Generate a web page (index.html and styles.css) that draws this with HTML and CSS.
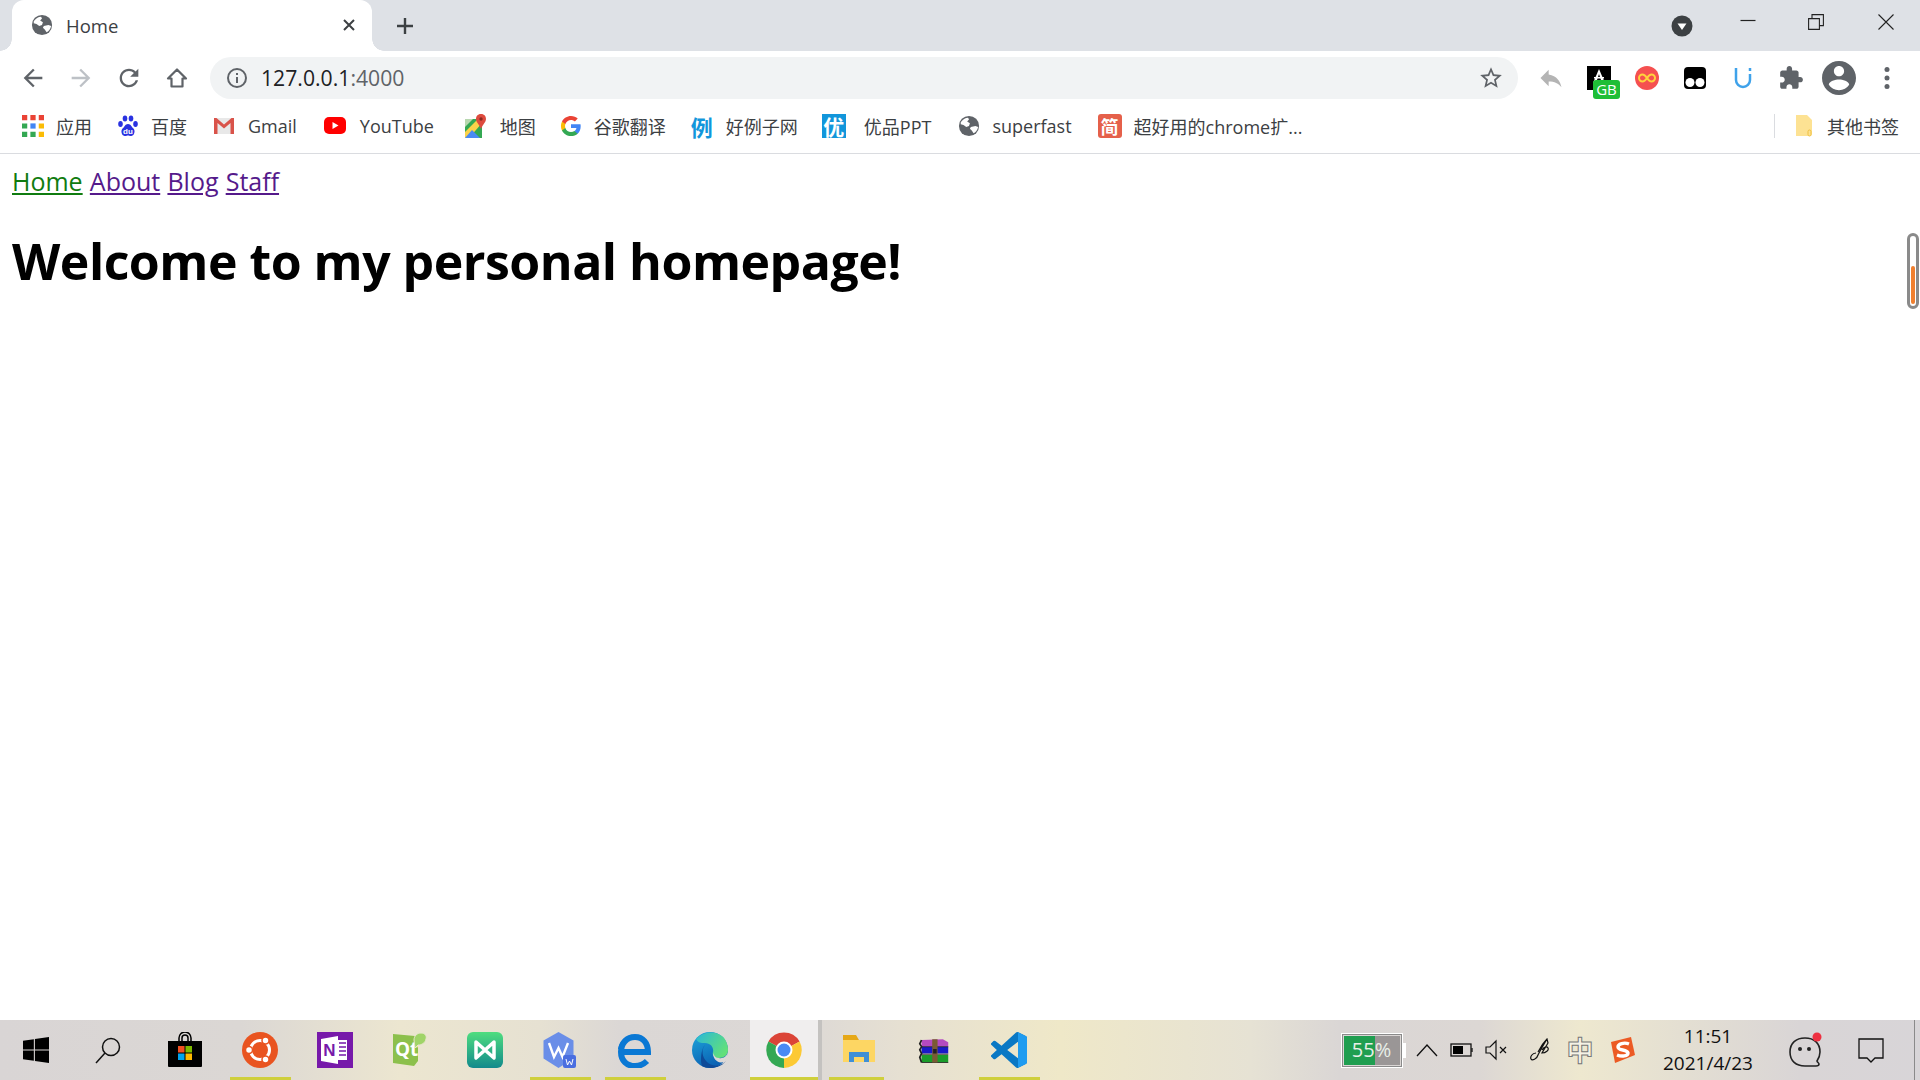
FILE: index.html
```html
<!DOCTYPE html>
<html lang="en">
<head>
<meta charset="utf-8">
<title>Home</title>
<link rel="stylesheet" href="styles.css">
</head>
<body>
<svg class="defs" width="0" height="0">
  <symbol id="globe" viewBox="0 0 24 24">
    <circle cx="12" cy="12" r="11" fill="#5f6368"/>
    <path d="M3 8c2-3 5-5 8-5l1 2-2 2 3 2-1 3-3 1-3-2-3-1z" fill="#fff"/>
    <path d="M14 13l5-1 3 1c-1 4-3 6-5 7l-2-3-2-2z" fill="#fff"/>
  </symbol>
</svg>
<div class="chrome">
  <div class="tabstrip">
    <div class="tab">
      <svg class="i22" viewBox="0 0 24 24"><use href="#globe"/></svg>
      <span class="tab-title">Home</span>
      <svg class="tab-close" viewBox="0 0 14 14"><path d="M2 2l10 10M12 2L2 12" stroke="#3c4043" stroke-width="2" fill="none"/></svg>
    </div>
    <div class="newtab"><svg class="i20" viewBox="0 0 20 20"><path d="M10 2v16M2 10h16" stroke="#3c4043" stroke-width="2.4"/></svg></div>
    <div class="spacer"></div>
    <div class="tabsearch"><svg class="i22" viewBox="0 0 22 22"><circle cx="11" cy="11" r="10.5" fill="#3c4043"/><path d="M6.500 8.500h9L11 15z" fill="#fff"/></svg></div>
    <div class="winbtn"><svg class="i16" viewBox="0 0 16 16"><path d="M.5 6.500h15" stroke="#222" stroke-width="1.200"/></svg></div>
    <div class="winbtn"><svg class="i16" viewBox="0 0 16 16"><path d="M.6 4.600h10.800v10.800H.6zM4 4.400V.6h11.400v11H11.600" stroke="#222" stroke-width="1.100" fill="none"/></svg></div>
    <div class="winbtn winbtn-close"><svg class="i16" viewBox="0 0 16 16"><path d="M.5.5l15 15M15.500.5l-15 15" stroke="#222" stroke-width="1.100"/></svg></div>
  </div>
  <div class="toolbar">
    <div class="tbtn"><svg class="i28" viewBox="0 0 24 24"><path fill="#5f6368" d="M20 11H7.830l5.590-5.590L12 4l-8 8 8 8 1.410-1.410L7.830 13H20v-2z"/></svg></div>
    <div class="tbtn"><svg class="i28" viewBox="0 0 24 24"><path fill="#bdc1c6" d="M4 11h12.170l-5.590-5.590L12 4l8 8-8 8-1.410-1.410L16.170 13H4v-2z"/></svg></div>
    <div class="tbtn"><svg class="i28" viewBox="0 0 24 24"><path fill="#5f6368" d="M17.650 6.350C16.200 4.900 14.210 4 12 4c-4.420 0-7.990 3.580-7.990 8s3.570 8 7.990 8c3.730 0 6.840-2.550 7.730-6h-2.080c-.82 2.330-3.040 4-5.650 4-3.310 0-6-2.690-6-6s2.690-6 6-6c1.660 0 3.140.69 4.220 1.780L13 11h7V4l-2.350 2.350z"/></svg></div>
    <div class="tbtn"><svg class="i24" viewBox="0 0 24 24"><path d="M3 12.500L12 3.500l9 9h-3.500V20.500h-11V12.500z" fill="none" stroke="#5f6368" stroke-width="2.200" stroke-linejoin="round"/></svg></div>
    <div class="omnibox">
      <svg class="i22" viewBox="0 0 22 22"><circle cx="11" cy="11" r="9" fill="none" stroke="#5f6368" stroke-width="2"/><path d="M11 10v6M11 6v2" stroke="#5f6368" stroke-width="2"/></svg>
      <span class="url"><b>127.0.0.1</b>:4000</span>
      <svg class="i26" viewBox="0 0 24 24"><path fill="#5f6368" d="M22 9.240l-7.190-.62L12 2 9.190 8.630 2 9.240l5.460 4.730L5.820 21 12 17.270 18.180 21l-1.630-7.030L22 9.240zM12 15.400l-3.760 2.270 1-4.280-3.320-2.880 4.380-.38L12 6.100l1.710 4.040 4.380.38-3.320 2.880 1 4.280L12 15.400z"/></svg>
    </div>
    <div class="tbtn tbtn-first"><svg class="i28" viewBox="0 0 24 24"><path fill="#b4b4b4" d="M10 9V5l-7 7 7 7v-4.100c5 0 8.500 1.600 11 5.100-1-5-4-10-11-11z"/></svg></div>
    <div class="tbtn">
      <span class="gb-wrap">
        <svg class="i24" viewBox="0 0 24 24"><rect width="24" height="24" fill="#000"/><path d="M12 3l6 14H6z" fill="#fff"/><path d="M12 8l3 9H9z" fill="#000"/><rect x="7" y="11" width="10" height="1.500" fill="#fff"/></svg>
        <span class="gb">GB</span>
      </span>
    </div>
    <div class="tbtn"><svg class="i24" viewBox="0 0 24 24"><circle cx="12" cy="12" r="12" fill="#f55050"/><path d="M12 12c-2-3-3-3.500-4.500-3.500a3.500 3.500 0 0 0 0 7c1.500 0 2.500-.5 4.500-3.500s3-3.500 4.500-3.500a3.500 3.500 0 0 1 0 7c-1.500 0-2.500-.5-4.500-3.500z" fill="none" stroke="#ffd23c" stroke-width="2"/></svg></div>
    <div class="tbtn"><svg class="i24" viewBox="0 0 24 24"><rect x="1" y="1" width="22" height="22" rx="4" fill="#000"/><circle cx="7" cy="16.500" r="4.500" fill="#fff"/><circle cx="17" cy="16.500" r="4.500" fill="#fff"/></svg></div>
    <div class="tbtn"><svg class="i24" viewBox="0 0 24 24"><path d="M5 2v12a7 7 0 0 0 14 0V8" fill="none" stroke="#3fa2ea" stroke-width="2.500"/><path d="M19 2v3" stroke="#3fa2ea" stroke-width="2.500"/></svg></div>
    <div class="tbtn"><svg class="i26" viewBox="0 0 24 24"><path fill="#5f6368" d="M20.500 11H19V7c0-1.100-.9-2-2-2h-4V3.500C13 2.120 11.880 1 10.500 1S8 2.120 8 3.500V5H4c-1.100 0-1.990.9-1.990 2v3.800H3.500c1.490 0 2.700 1.210 2.700 2.700s-1.210 2.700-2.700 2.700H2V20c0 1.100.9 2 2 2h3.800v-1.500c0-1.490 1.210-2.700 2.700-2.700 1.490 0 2.700 1.210 2.700 2.700V22H17c1.100 0 2-.9 2-2v-4h1.500c1.380 0 2.500-1.120 2.500-2.500S21.880 11 20.500 11z"/></svg></div>
    <div class="tbtn"><svg class="i34" viewBox="2 2 20 20"><path fill="#5f6368" d="M12 2C6.480 2 2 6.480 2 12s4.480 10 10 10 10-4.480 10-10S17.520 2 12 2zm0 3c1.660 0 3 1.340 3 3s-1.340 3-3 3-3-1.340-3-3 1.340-3 3-3zm0 14.200c-2.500 0-4.710-1.280-6-3.220.03-1.990 4-3.080 6-3.080 1.990 0 5.970 1.090 6 3.080-1.290 1.940-3.500 3.220-6 3.220z"/></svg></div>
    <div class="tbtn"><svg class="i24" viewBox="0 0 24 24"><circle cx="12" cy="3.500" r="2.500" fill="#5f6368"/><circle cx="12" cy="12" r="2.500" fill="#5f6368"/><circle cx="12" cy="20.500" r="2.500" fill="#5f6368"/></svg></div>
  </div>
  <div class="bookmarks">
    <a class="bm">
      <svg class="i22" viewBox="0 0 21 21"><path fill="#ea4335" d="M0 0h5v5H0zM8 0h5v5H8zM16 0h5v5h-5z"/><path fill="#4285f4" d="M8 8h5v5H8z"/><path fill="#34a853" d="M0 8h5v5H0zM0 16h5v5H0zM8 16h5v5H8z"/><path fill="#fbbc05" d="M16 8h5v5h-5zM16 16h5v5h-5z"/></svg>
      <span>应用</span>
    </a>
    <a class="bm">
      <svg class="i22" viewBox="0 0 22 22"><g fill="#2932e1"><ellipse cx="3.500" cy="9" rx="2.300" ry="3"/><ellipse cx="8" cy="3.500" rx="2.300" ry="3"/><ellipse cx="14" cy="3.500" rx="2.300" ry="3"/><ellipse cx="18.500" cy="9" rx="2.300" ry="3"/><path d="M11 9c3 0 3.500 3 5.500 4.500 2 2 1 7-2 7.500-1.500.3-2.500-.5-3.500-.5s-2 .8-3.500.5c-3-.5-4-5.500-2-7.500C7.500 12 8 9 11 9z"/></g><text x="11" y="19" class="du">du</text></svg>
      <span>百度</span>
    </a>
    <a class="bm">
      <svg class="i24" viewBox="0 0 24 24"><rect x="2" y="4" width="20" height="16" fill="#e8e8e8"/><path d="M2 20V4h2.500L12 10.500 19.500 4H22v16h-3.500V9L12 14.500 5.500 9v11z" fill="#d9534a"/></svg>
      <span>Gmail</span>
    </a>
    <a class="bm bm-yt">
      <svg class="i22" viewBox="0 0 22 22"><rect y="2" width="22" height="17" rx="5" fill="#f00"/><path d="M8.500 7l6 3.500-6 3.500z" fill="#fff"/></svg>
      <span>YouTube</span>
    </a>
    <a class="bm bm-map">
      <svg class="i24" viewBox="0 0 24 24"><path d="M1 5h17v19H1z" fill="#34a853"/><path d="M1 18L14 5h4v4L5 24H1z" fill="#fbd34a"/><path d="M1 24l7-8 8 8z" fill="#4a8af4"/><path d="M1 5h8L1 13z" fill="#b8d8b0"/><path d="M17 0c-3.500 0-5 2.500-5 5 0 3 3 5 5 10 2-5 5-7 5-10 0-2.500-1.500-5-5-5z" fill="#dd4b3e"/><circle cx="17" cy="5" r="1.700" fill="#8a2a20"/></svg>
      <span>地图</span>
    </a>
    <a class="bm bm-g">
      <svg class="i22" viewBox="0 0 48 48"><path fill="#4285F4" d="M45.120 24.500c0-1.560-.14-3.060-.4-4.500H24v8.510h11.840c-.51 2.750-2.060 5.080-4.390 6.640v5.520h7.110c4.160-3.830 6.560-9.470 6.560-16.170z"/><path fill="#34A853" d="M24 46c5.940 0 10.920-1.970 14.560-5.330l-7.110-5.520c-1.970 1.320-4.490 2.100-7.450 2.100-5.730 0-10.580-3.870-12.310-9.070H4.340v5.700C7.960 41.070 15.400 46 24 46z"/><path fill="#FBBC05" d="M11.690 28.180C11.250 26.860 11 25.450 11 24s.25-2.860.69-4.180v-5.700H4.340C2.850 17.090 2 20.450 2 24c0 3.550.85 6.910 2.340 9.880l7.350-5.700z"/><path fill="#EA4335" d="M24 10.750c3.230 0 6.130 1.110 8.410 3.290l6.310-6.310C34.910 4.180 29.930 2 24 2 15.400 2 7.960 6.930 4.340 14.120l7.350 5.700c1.730-5.200 6.580-9.070 12.310-9.070z"/></svg>
      <span>谷歌翻译</span>
    </a>
    <a class="bm bm-li">
      <span class="fav fav-li">例</span>
      <span>好例子网</span>
    </a>
    <a class="bm bm-you">
      <span class="fav fav-you">优</span>
      <span>优品PPT</span>
    </a>
    <a class="bm bm-glob">
      <svg class="i22" viewBox="0 0 24 24"><use href="#globe"/></svg>
      <span>superfast</span>
    </a>
    <a class="bm bm-jian">
      <span class="fav fav-jian">简</span>
      <span>超好用的chrome扩...</span>
    </a>
    <div class="spacer"></div>
    <div class="bm-sep"></div>
    <a class="bm">
      <svg class="i22" viewBox="0 0 18 22"><path d="M1 0h11l5 5v14a2 2 0 0 1-2 2H1z" fill="#fde293"/><rect x="13" y="15" width="3" height="6" rx="1.500" fill="none" stroke="#f0c040"/></svg>
      <span>其他书签</span>
    </a>
  </div>
</div>
<main class="page">
  <nav class="site-nav">
    <a href="#home" class="current">Home</a>
    <a href="#about" class="visited">About</a>
    <a href="#blog" class="visited">Blog</a>
    <a href="#staff" class="visited">Staff</a>
  </nav>
  <h1>Welcome to my personal homepage!</h1>
  <div class="scroll-mark"><div class="scroll-fill"></div></div>
</main>
<footer class="taskbar">
  <div class="cell cell-start"><svg class="i26" viewBox="0 0 24 24"><path fill="#000" d="M0 3.500L10 2v9.500H0zM11 1.800L24 0v11.500H11zM0 12.500h10V22L0 20.500zM11 12.500h13V24l-13-1.800z"/></svg></div>
  <div class="cell cell-start"><svg class="i28" viewBox="0 0 28 28"><circle cx="17" cy="11" r="8.500" fill="none" stroke="#111" stroke-width="1.500"/><path d="M11 17L2 27" stroke="#111" stroke-width="1.500"/></svg></div>
  <div class="cell">
    <svg class="i36" viewBox="0 0 36 36"><path d="M12 9V6a6 6 0 0 1 12 0v3M15 9V6a3 3 0 0 1 6 0v3" fill="none" stroke="#000" stroke-width="1.500"/><path d="M1 9h34v25a1 1 0 0 1-1 1H2a1 1 0 0 1-1-1z" fill="#000"/><path fill="#f25022" d="M11 14h6.500v6.500H11z"/><path fill="#7fba00" d="M18.500 14H25v6.500h-6.500z"/><path fill="#00a4ef" d="M11 21.500h6.500V28H11z"/><path fill="#ffb900" d="M18.500 21.500H25V28h-6.500z"/></svg>
  </div>
  <div class="cell open">
    <svg class="i36" viewBox="0 0 36 36"><circle cx="18" cy="18" r="18" fill="#e95420"/><circle cx="18" cy="18" r="9.500" fill="none" stroke="#fff" stroke-width="3"/><g fill="#fff" stroke="#e95420" stroke-width="1.500"><circle cx="7" cy="18" r="3.500"/><circle cx="23.500" cy="8.500" r="3.500"/><circle cx="23.500" cy="27.500" r="3.500"/></g></svg>
  </div>
  <div class="cell">
    <svg class="i36" viewBox="0 0 36 36"><rect width="36" height="36" fill="#7719aa"/><path d="M4 7l17-3v28l-17-3z" fill="#fff"/><path d="M21 8h9v20h-9z" fill="#fff"/><path d="M22 11h7M22 15h7M22 19h7M22 23h7" stroke="#7719aa" stroke-width="1.500"/><text x="12.500" y="24" class="one-n">N</text></svg>
  </div>
  <div class="cell">
    <svg class="i36" viewBox="0 0 36 36"><path d="M1 2l22 2 3 3v22l-4 5-21-3z" fill="#8cc04c"/><text x="3" y="24" class="qt">Qt</text><path d="M22 8c0-4 3-7 7-7s6 3 5 6c-1 4-4 6-8 6l-3 3z" fill="#a0d468" stroke="#e8e6cc"/></svg>
  </div>
  <div class="cell">
    <svg class="i36" viewBox="0 0 36 36"><defs><linearGradient id="mind" x1="0" y1="0" x2="0" y2="1"><stop offset="0" stop-color="#4fdd7f"/><stop offset="1" stop-color="#128a8c"/></linearGradient></defs><rect width="36" height="36" rx="6" fill="url(#mind)"/><path d="M9 10l18 16V10L9 26z" fill="none" stroke="#fff" stroke-width="3.500" stroke-linejoin="round"/></svg>
  </div>
  <div class="cell open">
    <svg class="i36" viewBox="0 0 36 36"><path d="M16.500 0l15 8.500v18L16.500 36l-15-9.500v-18z" fill="#6a8ee8"/><path d="M7 11l5 14 4.500-9 4 9L26 11" fill="none" stroke="#fff" stroke-width="2.400"/><rect x="21" y="23" width="13" height="13" rx="2" fill="#4a6ee0"/><path d="M24 27l1.500 6 2-4 2 4 1.500-6" fill="none" stroke="#fff"/></svg>
  </div>
  <div class="cell open">
    <svg class="i36" viewBox="0 0 36 36"><path d="M5 20h26c0-9-5-15-13-15S4 11 4 20s6 14 14 14c5 0 9-2 12-5" fill="none" stroke="#0a78d4" stroke-width="6"/><path d="M1 17C3 8 10 2 18 4c-6 1-11 6-13 13z" fill="#0a78d4"/></svg>
  </div>
  <div class="cell">
    <svg class="i36" viewBox="0 0 36 36"><defs><linearGradient id="edge" x1="0" y1="0" x2="0.400" y2="1"><stop offset="0" stop-color="#1ea8dc"/><stop offset="1" stop-color="#0b62b4"/></linearGradient><linearGradient id="edge2" x1="0" y1="0" x2="1" y2="0.600"><stop offset="0" stop-color="#2ab8d8"/><stop offset="1" stop-color="#62e07a"/></linearGradient></defs><circle cx="18" cy="18" r="18" fill="url(#edge)"/><path d="M4 7C10 0 22-2 30 4c4 3 6 9 6 14 0 5-4 8-9 8-5 0-7-3-6-6 1-4-2-9-8-9-4 0-7 0-9-4z" fill="url(#edge2)"/><path d="M13 13c-4 5-3 12 2 17 4 4 12 6 19-1-5 6-11 7-16 7-3 0-6-1-8-2-2-5-1-17 3-21z" fill="#0e4a98"/><path d="M36 20c-1 4-5 7-9 6-3 0-5-2-6-5 0 5 3 9 8 9.500l3.500-.5c2-3 3.500-6 3.500-10z" fill="#dcd8d6"/></svg>
  </div>
  <div class="cell open active">
    <svg class="i36" viewBox="0 0 36 36"><path fill="#db4437" d="M18 18L2.400 9.500A18 18 0 0 1 33.600 9.500z"/><path fill="#fcc934" d="M18 18L33.600 9.500A18 18 0 0 1 18 36z"/><path fill="#34a853" d="M18 18V36A18 18 0 0 1 2.400 9.500z"/><circle cx="18" cy="18" r="8.500" fill="#fff"/><circle cx="18" cy="18" r="6.500" fill="#4a8af4"/></svg>
  </div>
  <div class="cell-sep"></div>
  <div class="cell open open-multi">
    <svg class="i36" viewBox="0 0 36 36"><path d="M2 3h13l3 5H2z" fill="#e6a817"/><path d="M2 8h32v22H2z" fill="#fdd663"/><path d="M8 30V20h20v10h-5v-5H13v5z" fill="#3f8fd6"/></svg>
  </div>
  <div class="cell">
    <svg class="rar" viewBox="0 0 36 36" preserveAspectRatio="none"><path d="M4 4l24-1 6 4v6H4z" fill="#b44ac0"/><path d="M4 13h30v9H4z" fill="#1a1ac8"/><path d="M4 24h30v10H4z" fill="#1a9c2a"/><path d="M4 4l-2 5 2 4-2 4 2 5-2 5 2 7" fill="none" stroke="#222" stroke-width="2"/><path d="M4 13h30M4 23h30M4 34h30" stroke="#222"/><rect x="16" y="3" width="6" height="31" fill="#7a5a34"/><rect x="17" y="16" width="4" height="6" fill="#222"/></svg>
  </div>
  <div class="cell open">
    <svg class="i36" viewBox="0 0 24 24"><path fill="#0a78c4" d="M23.150 2.587L18.210.21a1.494 1.494 0 0 0-1.705.29l-9.460 8.630-4.120-3.128a.999.999 0 0 0-1.276.057L.327 7.261A1 1 0 0 0 .326 8.740L3.899 12 .326 15.260a1 1 0 0 0 .001 1.479L1.650 17.940a.999.999 0 0 0 1.276.057l4.120-3.128 9.460 8.630a1.492 1.492 0 0 0 1.704.29l4.942-2.377A1.500 1.500 0 0 0 24 20.060V3.939a1.500 1.500 0 0 0-.85-1.352zm-5.146 14.861L10.826 12l7.178-5.448v10.896z"/><path fill="#1f9cf0" d="M18 .1L23.150 2.587A1.500 1.500 0 0 1 24 3.939V20.060a1.500 1.500 0 0 1-.85 1.352L18 23.900z"/></svg>
  </div>
  <div class="spacer"></div>
  <div class="tray">
    <div class="batt-widget"><span class="batt-text">55%</span></div>
    <div class="tray-cell tc-caret"><svg class="i24" viewBox="0 0 24 24"><path d="M2 18L12 7l10 11" fill="none" stroke="#111" stroke-width="1.300"/></svg></div>
    <div class="tray-cell"><svg class="i24" viewBox="0 0 24 16"><rect x="1" y="2" width="20" height="12" fill="none" stroke="#111" stroke-width="1.300"/><rect x="3" y="4" width="10" height="8" fill="#000"/><path d="M22 6v4" stroke="#111" stroke-width="1.300"/></svg></div>
    <div class="tray-cell"><svg class="i24" viewBox="0 0 24 24"><path d="M1 9h4l6-6v18l-6-6H1z" fill="none" stroke="#111" stroke-width="1.200"/><path d="M15 9l6 6M21 9l-6 6" stroke="#111" stroke-width="1.200"/></svg></div>
    <div class="tray-cell tc-wide tc-pen"><svg class="i24" viewBox="0 0 24 24"><path d="M18 1c-3 5-6 10-9 16-1 4-6 6-7 4s1-6 5-6M9 14c2-4 5-9 9-13l1 4-6 10c4 0 7-3 6-5s-4-1-6 2" fill="none" stroke="#111" stroke-width="1.200"/></svg></div>
    <div class="tray-cell tc-wide tc-zh"><span class="zh-box">中</span></div>
    <div class="tray-cell tc-wide"><svg class="i28" viewBox="0 0 28 28"><path d="M3 6l20-5 4 18-20 8z" fill="#ec5a24"/><path d="M21 8c-5-2-11 0-11 3 0 4 9 2 10 6 0 3-6 4-11 2" fill="none" stroke="#fff" stroke-width="3.400"/></svg></div>
    <div class="clock"><span>11:51</span><span>2021/4/23</span></div>
    <div class="tray-cell tc-bot">
      <svg class="i36" viewBox="0 0 36 36"><path d="M18 6C9 6 3 11 3 20s6 14 15 14h11c2 0 3-1 3-2s-2-2-2-3c2-3 3-5 3-9 0-9-6-14-15-14z" fill="none" stroke="#222" stroke-width="1.600"/><circle cx="13" cy="17" r="2" fill="#222"/><circle cx="22" cy="17" r="2" fill="#222"/><circle cx="30" cy="5" r="4.500" fill="#ee3040"/></svg>
    </div>
    <div class="tray-cell tc-note"><svg class="i28" viewBox="0 0 28 28"><path d="M2 3h24v19h-8l-4 4-4-4H2z" fill="none" stroke="#111" stroke-width="1.300"/></svg></div>
    <div class="desktop-edge"></div>
  </div>
</footer>
</body>
</html>
```
FILE: styles.css
```css
* { box-sizing: border-box; }
html, body { margin: 0; padding: 0; width: 1920px; height: 1080px; overflow: hidden; background: #fff; }
body { display: flex; flex-direction: column; font-family: "Open Sans", "Noto Sans CJK SC", sans-serif; }
.defs { position: absolute; }
svg { display: block; flex: none; }
.i16 { width: 16px; height: 16px; }
.i20 { width: 20px; height: 20px; }
.i22 { width: 22px; height: 22px; }
.i24 { width: 24px; height: 24px; }
.i26 { width: 26px; height: 26px; }
.i28 { width: 28px; height: 28px; }
.i34 { width: 34px; height: 34px; }
.i36 { width: 36px; height: 36px; }
.rar { width: 32px; height: 27px; }
.spacer { flex: 1; }

.tabstrip { height: 51px; background: #dee1e6; display: flex; align-items: stretch; padding-left: 12px; }
.tab { position: relative; width: 360px; background: #fff; border-radius: 12px 12px 0 0; display: flex; align-items: center; padding: 0 16px 1px 19px; }
.tab::before, .tab::after { content: ""; position: absolute; bottom: 0; width: 12px; height: 12px; }
.tab::before { left: -12px; background: radial-gradient(circle at 0 0, #dee1e6 11.5px, #fff 12px); }
.tab::after { right: -12px; background: radial-gradient(circle at 100% 0, #dee1e6 11.5px, #fff 12px); }
.tab-title { flex: 1; margin-left: 13px; font-size: 18.500px; color: #3c4043; }
.tab-close { width: 14px; height: 14px; }
.newtab { width: 42px; margin-left: 12px; display: flex; align-items: center; justify-content: center; }
.tabsearch { width: 36px; margin-right: 14px; display: flex; align-items: center; justify-content: center; }
.winbtn { width: 68px; display: flex; justify-content: center; padding-top: 14px; }
.winbtn-close { width: 70px; padding-left: 2px; }

.toolbar { height: 54px; display: flex; align-items: center; padding: 0 9px; background: #fff; }
.tbtn { width: 48px; height: 48px; display: flex; align-items: center; justify-content: center; }
.tbtn-first { margin-left: 9px; }
.omnibox { width: 1308px; height: 42px; margin-left: 9px; border-radius: 21px; background: #f1f3f4; display: flex; align-items: center; padding: 0 14px 0 16px; }
.url { flex: 1; margin-left: 13px; padding-bottom: 2px; font-size: 21.200px; color: #5f6368; }
.url b { font-weight: 400; color: #202124; }
.gb-wrap { position: relative; display: block; width: 24px; height: 24px; }
.gb { position: absolute; left: 6px; top: 14px; width: 27px; height: 19px; border-radius: 3px; background: #1fbe37; color: #fff; font-size: 15px; line-height: 19px; text-align: center; }

.bookmarks { height: 49px; padding: 0 21px 7px 22px; display: flex; align-items: center; gap: 25px; border-bottom: 1px solid #dadce0; background: #fff; font-size: 18px; color: #3c4043; }
.bm { display: flex; align-items: center; gap: 12px; white-space: nowrap; }
.bm-yt { margin-left: 2px; gap: 14px; }
.bm-map { margin-left: 5px; }
.bm-g { margin-left: -1px; }
.bm-li { margin-left: -1px; }
.bm-you { margin-left: -1px; gap: 18px; }
.bm-glob { margin-left: 2px; }
.bm-jian { margin-left: 1px; }
.bm-sep { width: 1px; height: 24px; background: #dadce0; margin-right: -7px; }
.fav { width: 24px; height: 24px; display: flex; align-items: center; justify-content: center; flex: none; font-family: "Noto Sans CJK SC", sans-serif; font-weight: 700; }
.fav-li { color: #1296db; font-size: 22px; }
.fav-you { background: #1296db; color: #fff; font-size: 21px; }
.fav-jian { background: #e5604a; color: #fff; border-radius: 3px; font-size: 18px; }
.du { font: 700 8px "Liberation Sans", sans-serif; fill: #fff; text-anchor: middle; }

.page { position: relative; flex: 1; padding: 8px 12px 0; background: #fff; }
.site-nav { display: flex; gap: 7.200px; font-size: 25px; line-height: 38px; }
.site-nav a { color: #551a8b; }
.site-nav a.current { color: #107c10; }
h1 { margin: 27px 0 0; font-size: 50px; line-height: 68px; font-weight: 700; color: #000; letter-spacing: -0.5px; }
.scroll-mark { position: absolute; right: 1px; top: 79px; width: 12px; height: 76px; border: 3px solid #8a8a8a; border-radius: 6px; background: #fff; padding: 30px 1px 2px; }
.scroll-fill { height: 100%; border-radius: 2px; background: #f08030; }

.taskbar { height: 60px; display: flex; align-items: stretch; background: linear-gradient(90deg, #d9d5d5 0, #dbd7d4 240px, #ece6d0 400px, #e6e1d2 540px, #dbd7d5 620px, #dcd8d6 800px, #e6e0d2 900px, #efe8c8 1060px, #e6e2d4 1250px, #dad6d5 1340px, #dcd7d4 1480px, #eee8cf 1580px, #e4dfd2 1680px, #d9d5d6 1800px, #d8d5d8 1920px); }
.cell { position: relative; width: 75px; display: flex; align-items: center; justify-content: center; }
.cell-start { width: 72px; }
.cell-start + .cell:not(.cell-start) { margin-left: 3.500px; }
.cell.open::after { content: ""; position: absolute; left: 7px; right: 7px; bottom: 0; height: 3px; background: #cfcf3c; }
.cell.active { background: #f0eeee; width: 68px; margin-left: 2px; }
.cell.active::after { left: 0; right: 0; }
.cell-sep { width: 4px; background: #c4c2c0; }
.cell.open-multi::after { right: 13px; }
.one-n { font: 700 17px "Liberation Sans", sans-serif; fill: #7719aa; text-anchor: middle; }
.qt { font: 700 19px "Open Sans", sans-serif; fill: #fff; }

.tray { display: flex; align-items: center; height: 60px; color: #111; }
.batt-widget { position: relative; width: 62px; height: 35px; margin-right: 6px; border: 1px solid #fff; outline: 1px solid #8a8a8a; outline-offset: -2px; padding: 2px; background: linear-gradient(90deg, #1f9e50 0, #1f9e50 55%, #9a9696 55%); display: flex; align-items: center; justify-content: center; background-clip: content-box; }
.batt-widget::after { content: ""; position: absolute; right: -4px; top: 9px; width: 3px; height: 15px; background: #fff; }
.batt-text { color: #e8efe8; font-size: 20px; line-height: 1; }
.tray-cell { width: 35px; display: flex; align-items: center; justify-content: center; }
.tc-caret { margin-left: 1px; }
.tc-wide { width: 42px; }
.tc-pen { margin-left: 5px; }
.tc-zh { margin-left: -2.500px; }
.zh-box { font-family: "Noto Sans CJK SC", sans-serif; font-size: 27px; line-height: 30px; font-weight: 700; color: #f6f3e6; -webkit-text-stroke: 1px #777; }
.clock { width: 106px; margin-left: 12px; display: flex; flex-direction: column; align-items: center; font-size: 19px; line-height: 27px; color: #111; }
.tc-bot { width: 48px; margin-left: 20px; }
.tc-note { width: 48px; margin-left: 18px; }
.desktop-edge { width: 1px; height: 60px; margin-left: 19px; margin-right: 5px; background: #8a8a8a; }
```
